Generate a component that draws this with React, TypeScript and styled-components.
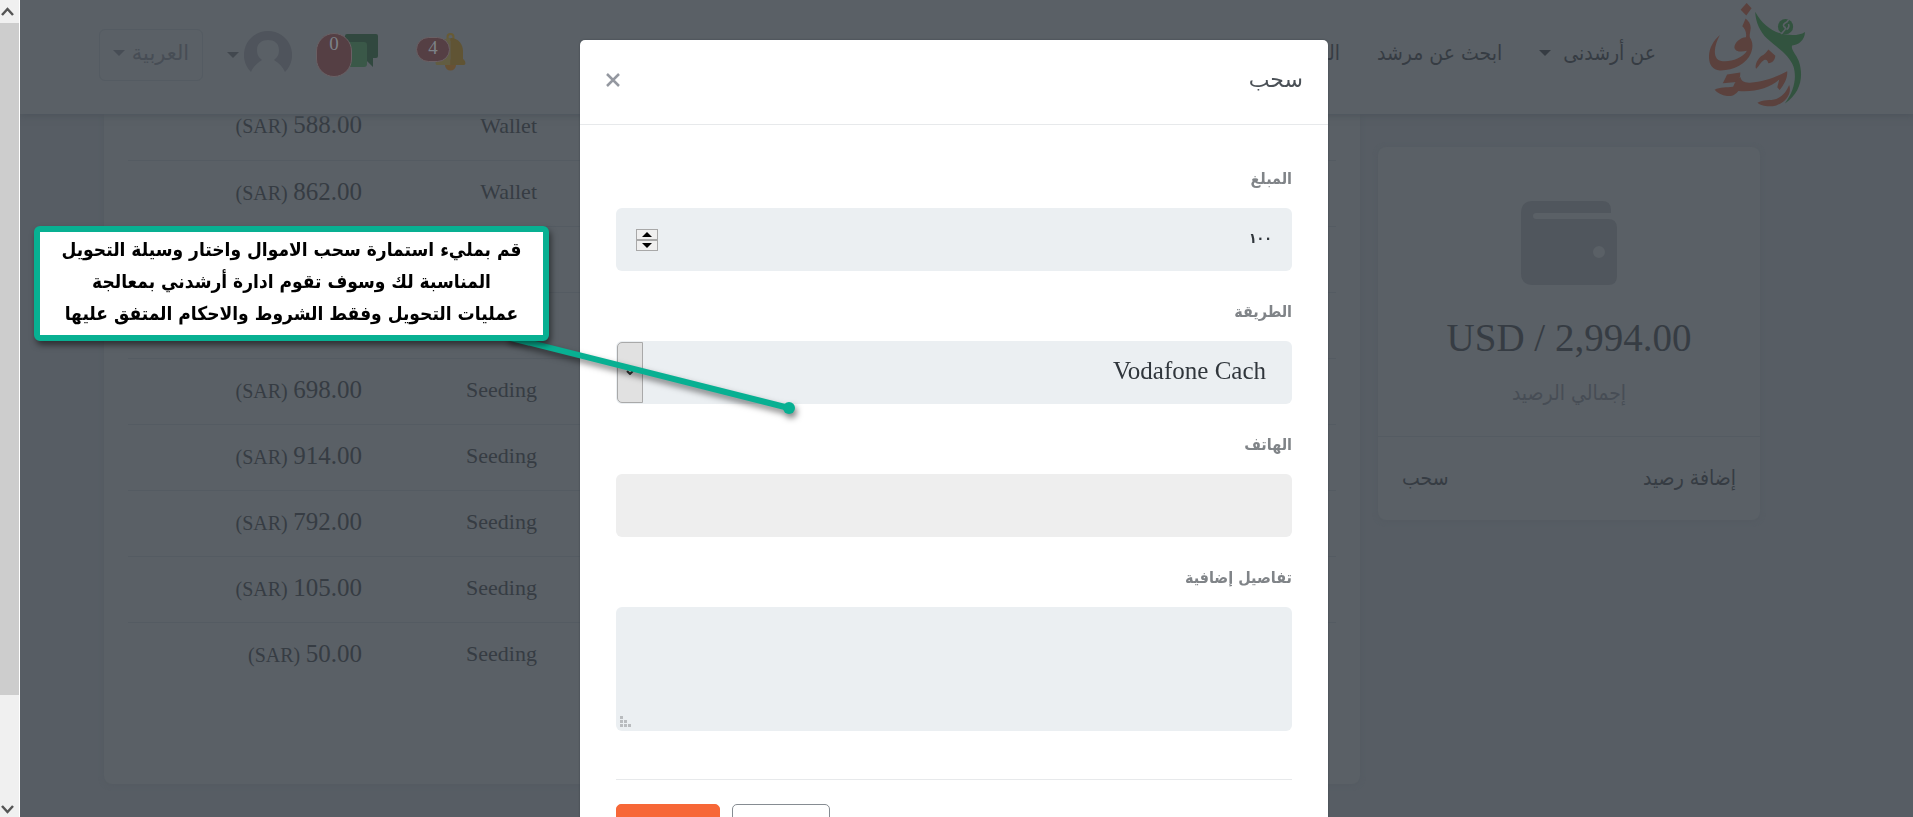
import React from 'react';
import styled, { createGlobalStyle } from 'styled-components';

const serif = '"Liberation Serif", "DejaVu Sans", serif';
const arabic = '"DejaVu Sans", sans-serif';
const arabicNarrow = '"DejaVu Sans Condensed", "DejaVu Sans", sans-serif';

const color = {
  page: '#575d64',
  surface: '#5a6066',
  line: '#545b62',
  shadow: '#4d545b',
  ink: '#363c43',
  faded: '#474d55',
  accent: '#08b092',
  field: '#ebeff2',
};

const GlobalStyle = createGlobalStyle`
  * { box-sizing: border-box; }
  html, body { margin: 0; height: 100%; overflow: hidden; }
  body { background: ${color.page}; font-family: ${serif}; }
  button, input, select, textarea { font-family: inherit; margin: 0; }
`;

const Screen = styled.div`
  display: flex;
  height: 100vh;
  overflow: hidden;
`;

const ScrollTrack = styled.div`
  display: flex;
  flex-direction: column;
  flex: none;
  width: 20px;
  background: #f0f0f0;
  border-right: 1px solid #fff;
`;

const ScrollArrow = styled.div`
  height: 23px;
  padding: 6px 0 0 1px;
  svg { display: block; }
`;

const ScrollThumb = styled.div`
  flex: 672;
  background: #cdcdcd;
`;

const ScrollRest = styled.div`
  flex: 99;
`;

const Page = styled.div`
  flex: 1;
  min-width: 0;
  overflow: hidden;
  direction: rtl;
  color: ${color.ink};
`;

const Header = styled.header`
  position: relative;
  z-index: 1;
  display: flex;
  align-items: center;
  height: 114px;
  padding: 0 108px 4px 79px;
  background: ${color.surface};
  box-shadow: 0 1px 7px 1px ${color.shadow};
`;

const Logo = styled.a`
  display: block;
  margin-left: 53px;
  svg { display: block; }
`;

const Nav = styled.nav`
  display: flex;
  flex: 1;
  gap: 37px;
  padding-bottom: 4px;
`;

const NavLink = styled.a`
  display: flex;
  align-items: center;
  gap: 12px;
  color: ${color.ink};
  font: 21px/28px ${arabicNarrow};
  text-decoration: none;
  white-space: nowrap;
`;

const Caret = styled.span`
  border: 6px solid transparent;
  border-top-color: currentColor;
  border-bottom: 0;
`;

const Tools = styled.div`
  display: flex;
  align-items: center;
`;

const IconButton = styled.button<{ $gap: number }>`
  display: flex;
  align-items: center;
  margin-left: ${(p) => p.$gap}px;
  padding: 0;
  border: 0;
  background: none;
  color: #42484f;
  gap: 5px;
  svg { display: block; }
`;

const BadgeHolder = styled.span<{ $w: number }>`
  position: relative;
  display: block;
  width: ${(p) => p.$w}px;
  height: 46px;
`;

const Badge = styled.span<{ $w: number; $h: number; $top: number }>`
  position: absolute;
  left: 0;
  top: ${(p) => p.$top}px;
  width: ${(p) => p.$w}px;
  height: ${(p) => p.$h}px;
  border: 1px solid #6a6064;
  border-radius: 18px;
  background: #553f44;
  color: #7c8288;
  font: 19px/20px ${serif};
  text-align: center;
`;

const Language = styled.button`
  display: flex;
  align-items: center;
  justify-content: center;
  gap: 7px;
  width: 104px;
  height: 52px;
  padding: 0 0 4px;
  border: 1px solid ${color.line};
  border-radius: 6px;
  background: none;
  color: ${color.faded};
  font: 21px/24px ${arabic};
`;

const Content = styled.main`
  display: flex;
  align-items: flex-start;
  gap: 18px;
  padding: 0 153px 0 84px;
`;

const Card = styled.section`
  background: ${color.surface};
  border-radius: 8px;
  box-shadow: 0 1px 5px ${color.line};
`;

const BalanceCard = styled(Card)`
  width: 382px;
  margin-top: 33px;
`;

const Balance = styled.div`
  display: flex;
  flex-direction: column;
  align-items: center;
  padding: 54px 0 29px;
  border-bottom: 1px solid ${color.line};
`;

const Total = styled.div`
  margin-top: 29px;
  font-size: 39px;
  line-height: 48px;
`;

const Caption = styled.div`
  margin-top: 17px;
  color: ${color.faded};
  font: 21px/28px ${arabicNarrow};
`;

const BalanceLinks = styled.div`
  display: flex;
  justify-content: space-between;
  padding: 27px 24px 28px;
`;

const BalanceLink = styled.a`
  color: ${color.ink};
  font: 21px/28px ${arabicNarrow};
  text-decoration: none;
`;

const HistoryCard = styled(Card)`
  flex: 1;
  margin-top: -20px;
  padding: 0 24px 96px;
`;

const History = styled.table`
  width: 100%;
  border-collapse: collapse;
  table-layout: fixed;
`;

const Cell = styled.td<{ $w?: number }>`
  width: ${(p) => (p.$w ? `${p.$w}px` : 'auto')};
  height: 66px;
  padding: 0 0 2px;
  font-size: 22px;
  line-height: 28px;
  text-align: right;
  white-space: nowrap;
  tr:not(:last-child) > & { border-bottom: 1px solid ${color.line}; }
`;

const Amount = styled.span`
  font-size: 25px;
`;

const Currency = styled.span`
  font-size: 20px;
`;

const ModalLayer = styled.div`
  position: fixed;
  z-index: 2;
  inset: 0 0 0 20px;
  display: flex;
  justify-content: center;
  align-items: flex-start;
  padding: 40px 25px 0 0;
  overflow: hidden;
  direction: rtl;
`;

const Dialog = styled.div`
  width: 748px;
  border-radius: 5px;
  background: #fff;
  box-shadow: 0 0 2px #3c4248;
`;

const DialogHeader = styled.div`
  display: flex;
  align-items: center;
  justify-content: space-between;
  height: 85px;
  padding: 0 25px 4px;
  border-bottom: 1px solid #e7e9eb;
`;

const Title = styled.h2`
  margin: 0;
  color: #4b5157;
  font: 22px/32px ${arabic};
`;

const Close = styled.button`
  padding: 0;
  border: 0;
  background: none;
  svg { display: block; }
`;

const Form = styled.form`
  padding: 42px 36px 36px;
`;

const Group = styled.div`
  margin-bottom: 29px;
`;

const Label = styled.label`
  display: block;
  margin-bottom: 17px;
  color: #808488;
  font: bold 16px/24px ${arabicNarrow};
`;

const Field = styled.div<{ $disabled?: boolean }>`
  display: flex;
  align-items: center;
  height: 63px;
  border-radius: 6px;
  overflow: hidden;
  background: ${(p) => (p.$disabled ? '#eee' : color.field)};
`;

const TextInput = styled.input`
  flex: 1;
  min-width: 0;
  height: 100%;
  padding: 0 20px 4px;
  border: 0;
  outline: 0;
  background: none;
  color: #30363c;
  font: bold 14px/24px ${arabicNarrow};
`;

const Method = styled.select`
  flex: 1;
  height: 100%;
  padding: 0 26px 3px;
  border: 0;
  outline: 0;
  appearance: none;
  background: none;
  color: #30363c;
  font: 25px/32px ${serif};
`;

const Spinner = styled.div`
  display: flex;
  flex-direction: column;
  margin-left: 20px;
`;

const Step = styled.button`
  display: flex;
  align-items: center;
  justify-content: center;
  width: 22px;
  height: 11px;
  padding: 0;
  border: 1px solid #a8a8a8;
  background: #efefef;
  svg { display: block; }
`;

const SelectArrow = styled.span`
  display: flex;
  align-items: center;
  justify-content: center;
  width: 26px;
  height: 61px;
  margin-left: 1px;
  border: 1px solid #a9a9a9;
  border-radius: 5px 0 0 5px;
  background: #e1e1e1;
`;

const AreaHolder = styled.div`
  position: relative;
`;

const Area = styled.textarea`
  display: block;
  width: 100%;
  height: 124px;
  padding: 16px 20px;
  border: 0;
  border-radius: 6px;
  outline: 0;
  resize: none;
  background: ${color.field};
  font: 18px/24px ${arabic};
`;

const Grip = styled.svg`
  position: absolute;
  left: 4px;
  bottom: 3px;
`;

const Actions = styled.div`
  display: flex;
  justify-content: flex-end;
  gap: 12px;
  margin-top: 48px;
  padding-top: 24px;
  border-top: 1px solid #e7e9eb;
`;

const Action = styled.button<{ $primary?: boolean }>`
  width: ${(p) => (p.$primary ? 104 : 98)}px;
  height: 50px;
  border: 1px solid ${(p) => (p.$primary ? '#f76737' : '#868c92')};
  border-radius: 5px;
  background: ${(p) => (p.$primary ? '#f76737' : '#fff')};
  color: ${(p) => (p.$primary ? '#fff' : '#808488')};
  font: 19px/24px ${arabicNarrow};
`;

const Callout = styled.aside`
  position: fixed;
  z-index: 4;
  left: 34px;
  top: 226px;
  width: 515px;
  height: 115px;
  padding: 1px 0;
  border: 6px solid ${color.accent};
  border-radius: 6px;
  background: #fff;
  box-shadow: 2px 4px 6px rgba(0, 0, 0, 0.5);
  color: #000;
  direction: rtl;
  font: bold 19px/32px ${arabicNarrow};
  text-align: center;
  white-space: nowrap;
`;

const Pointer = styled.svg`
  position: fixed;
  z-index: 3;
  left: 490px;
  top: 330px;
  filter: drop-shadow(2px 4px 3px rgba(0, 0, 0, 0.5));
  pointer-events: none;
`;

const Bell = styled.svg`
  position: absolute;
  left: 19px;
  top: 1px;
`;

const Chat = styled.svg`
  position: absolute;
  left: 27px;
  top: 2px;
`;

/* The two rows without values sit fully behind the note. */
const rows: { id: number; type?: string; amount?: string }[] = [
  { id: 1, type: 'Wallet', amount: '588.00' },
  { id: 2, type: 'Wallet', amount: '862.00' },
  { id: 3 },
  { id: 4 },
  { id: 5, type: 'Seeding', amount: '698.00' },
  { id: 6, type: 'Seeding', amount: '914.00' },
  { id: 7, type: 'Seeding', amount: '792.00' },
  { id: 8, type: 'Seeding', amount: '105.00' },
  { id: 9, type: 'Seeding', amount: '50.00' },
];

const LogoMark = () => (
  <svg width="96" height="106" viewBox="25 7 291 318" aria-hidden="true">
    <g fill="#5b413d">
      <path d="M139 8 L154 24 L138 46 L121 29 Z" />
      <path d="M136 55 C146 63 153 74 151 88 C150 98 147 105 149 113 C158 126 159 143 152 161 C139 193 98 214 58 213 C34 211 24 193 25 168 C26 145 38 122 58 105 C45 128 36 161 49 177 C64 193 122 184 140 153 C122 158 104 156 102 143 C102 129 119 113 137 112 C140 97 133 86 126 79 Z" />
      <path d="M205 149 L226 168 C225 181 217 190 205 191 C203 184 200 178 192 181 C182 187 177 198 168 208 C162 198 174 174 185 168 C193 164 199 158 205 149 Z" />
      <path d="M80 225 L120 219 L119 232 L109 248 L67 252 Z" />
      <path d="M42 271 C58 262 79 265 98 262 C104 249 110 239 120 233 C123 245 131 251 150 250 C190 248 229 233 262 215 C264 236 252 256 239 272 L232 264 L238 240 C209 266 164 279 114 275 C106 284 98 292 80 290 C64 288 50 280 42 271 Z" />
      <path d="M268 257 C277 281 259 309 229 319 C206 325 181 320 172 311 C188 299 211 305 229 299 C249 292 260 276 268 257 Z" />
    </g>
    <g fill="#32533f">
      <path d="M165 35 C187 75 219 98 257 104 C283 107 303 105 316 96 C315 121 297 135 277 137 C272 149 288 162 297 184 C313 230 303 281 255 313 C282 277 292 236 281 201 C268 164 225 139 201 116 C180 97 166 65 165 35 Z" />
      <circle cx="257" cy="80" r="23" />
    </g>
    <path d="M267 58 L261 66 Q247 73 252 80 Q262 84 251 94 L244 102 M266 72 Q270 82 260 89" fill="none" stroke={color.surface} strokeWidth="5" />
  </svg>
);

const BellIcon = () => (
  <Bell width="31" height="40" viewBox="0 0 31 40" aria-hidden="true">
    <circle cx="15.500" cy="4" r="3" fill="none" stroke="#685b35" strokeWidth="2" />
    <circle cx="15.500" cy="32" r="5.500" fill="#685133" />
    <path d="M15.500 5 C7 5 3 12 3 18 V26 C0 28 0 32 2 32 H15.500 Z" fill="#625d42" />
    <path d="M15.500 5 C24 5 28 12 28 18 V26 C31 28 31 32 29 32 H15.500 Z" fill="#605434" />
  </Bell>
);

const ChatIcon = () => (
  <Chat width="36" height="34" viewBox="0 0 36 34" aria-hidden="true">
    <path d="M4 0 H33 Q35 0 35 2 V22 Q35 24 33 24 H30 V33 L23 26 V24 H4 Q2 24 2 22 V2 Q2 0 4 0 Z" fill="#31483f" />
    <rect x="0" y="8" width="24" height="25" rx="3" fill="#3a5848" />
  </Chat>
);

const Avatar = () => (
  <svg width="48" height="48" viewBox="0 0 48 48" aria-hidden="true">
    <path fillRule="evenodd" fill="#4f545c" d="M24 0 A24 24 0 0 1 41 41 C39 36 35 32 30 29 C34 26 35 23 35 19 C35 12 30 9 24 9 C18 9 13 12 13 19 C13 23 14 26 18 29 C13 32 9 36 7 41 A24 24 0 0 1 24 0 Z" />
  </svg>
);

const WalletIcon = () => (
  <svg width="96" height="84" viewBox="0 0 96 84" aria-hidden="true">
    <path fillRule="evenodd" fill="#50565d" d="M12 0 H81 Q90 0 90 9 V12 H15 Q12 12 12 15 Q12 18 15 18 H87 Q96 18 96 27 V75 Q96 84 87 84 H12 Q0 84 0 72 V12 Q0 0 12 0 Z M78 45 a6 6 0 1 0 0 12 a6 6 0 1 0 0 -12 Z" />
  </svg>
);

export default function App() {
  return (
    <Screen>
      <GlobalStyle />
      <ScrollTrack>
        <ScrollArrow>
          <svg width="13" height="12"><path d="M1 9 L6.500 3 L12 9" fill="none" stroke="#555" strokeWidth="2.500" /></svg>
        </ScrollArrow>
        <ScrollThumb />
        <ScrollRest />
        <ScrollArrow>
          <svg width="13" height="16"><path d="M1 6 L6.500 12 L12 6" fill="none" stroke="#555" strokeWidth="2.500" /></svg>
        </ScrollArrow>
      </ScrollTrack>

      <Page lang="ar">
        <Header>
          <Logo href="#" aria-label="أرشدنى"><LogoMark /></Logo>
          <Nav>
            <NavLink href="#">عن أرشدنى<Caret /></NavLink>
            <NavLink href="#">ابحث عن مرشد</NavLink>
            <NavLink href="#">المرشدين</NavLink>
          </Nav>
          <Tools>
            <IconButton $gap={37} type="button">
              <BadgeHolder $w={50}>
                <BellIcon />
                <Badge $w={34} $h={25} $top={5}>4</Badge>
              </BadgeHolder>
            </IconButton>
            <IconButton $gap={24} type="button">
              <BadgeHolder $w={63}>
                <ChatIcon />
                <Badge $w={36} $h={44} $top={1}>0</Badge>
              </BadgeHolder>
            </IconButton>
            <IconButton $gap={24} type="button">
              <Avatar />
              <Caret />
            </IconButton>
            <Language type="button">العربية<Caret /></Language>
          </Tools>
        </Header>

        <Content>
          <BalanceCard>
            <Balance>
              <WalletIcon />
              <Total dir="ltr">USD / 2,994.00</Total>
              <Caption>إجمالي الرصيد</Caption>
            </Balance>
            <BalanceLinks>
              <BalanceLink href="#">إضافة رصيد</BalanceLink>
              <BalanceLink href="#">سحب</BalanceLink>
            </BalanceLinks>
          </BalanceCard>

          <HistoryCard>
            <History>
              <tbody>
                {rows.map((row) => (
                  <tr key={row.id}>
                    <Cell />
                    <Cell $w={175}>{row.type}</Cell>
                    <Cell $w={234}>
                      {row.amount && (
                        <>
                          <Amount>{row.amount}</Amount> <Currency>(SAR)</Currency>
                        </>
                      )}
                    </Cell>
                  </tr>
                ))}
              </tbody>
            </History>
          </HistoryCard>
        </Content>
      </Page>

      <ModalLayer lang="ar">
        <Dialog role="dialog" aria-labelledby="dialog-title">
          <DialogHeader>
            <Title id="dialog-title">سحب</Title>
            <Close type="button" aria-label="إغلاق">
              <svg width="16" height="16"><path d="M2 2 L14 14 M14 2 L2 14" stroke="#9498a0" strokeWidth="2.500" /></svg>
            </Close>
          </DialogHeader>
          <Form>
            <Group>
              <Label htmlFor="amount">المبلغ</Label>
              <Field>
                <TextInput id="amount" inputMode="numeric" defaultValue="١٠٠" />
                <Spinner>
                  <Step type="button" aria-label="زيادة"><svg width="10" height="5"><path d="M0 5 L5 0 L10 5 Z" /></svg></Step>
                  <Step type="button" aria-label="نقص"><svg width="10" height="5"><path d="M0 0 L5 5 L10 0 Z" /></svg></Step>
                </Spinner>
              </Field>
            </Group>
            <Group>
              <Label htmlFor="method">الطريقة</Label>
              <Field>
                <Method id="method" defaultValue="vodafone">
                  <option value="vodafone">Vodafone Cach</option>
                </Method>
                <SelectArrow>
                  <svg width="8" height="5"><path d="M1 1 L4 4 L7 1" fill="none" stroke="#333" strokeWidth="2" /></svg>
                </SelectArrow>
              </Field>
            </Group>
            <Group>
              <Label htmlFor="phone">الهاتف</Label>
              <Field $disabled><TextInput id="phone" type="tel" disabled /></Field>
            </Group>
            <Group>
              <Label htmlFor="details">تفاصيل إضافية</Label>
              <AreaHolder>
                <Area id="details" />
                <Grip width="12" height="12" fill="#b9bcbf">
                  <path d="M0 0h3v3h-3z M0 4h3v3h-3z M4 4h3v3h-3z M0 8h3v3h-3z M4 8h3v3h-3z M8 8h3v3h-3z" />
                </Grip>
              </AreaHolder>
            </Group>
            <Actions>
              <Action type="button">إلغاء</Action>
              <Action type="submit" $primary>أرسل</Action>
            </Actions>
          </Form>
        </Dialog>
      </ModalLayer>

      <Pointer width="320" height="90">
        <path d="M17 7 L299 78" stroke={color.accent} strokeWidth="6" />
        <circle cx="299" cy="78" r="6" fill={color.accent} />
      </Pointer>
      <Callout lang="ar">
        قم بمليء استمارة سحب الاموال واختار وسيلة التحويل
        <br />
        المناسبة لك وسوف تقوم ادارة أرشدني بمعالجة
        <br />
        عمليات التحويل وفقط الشروط والاحكام المتفق عليها
      </Callout>
    </Screen>
  );
}
